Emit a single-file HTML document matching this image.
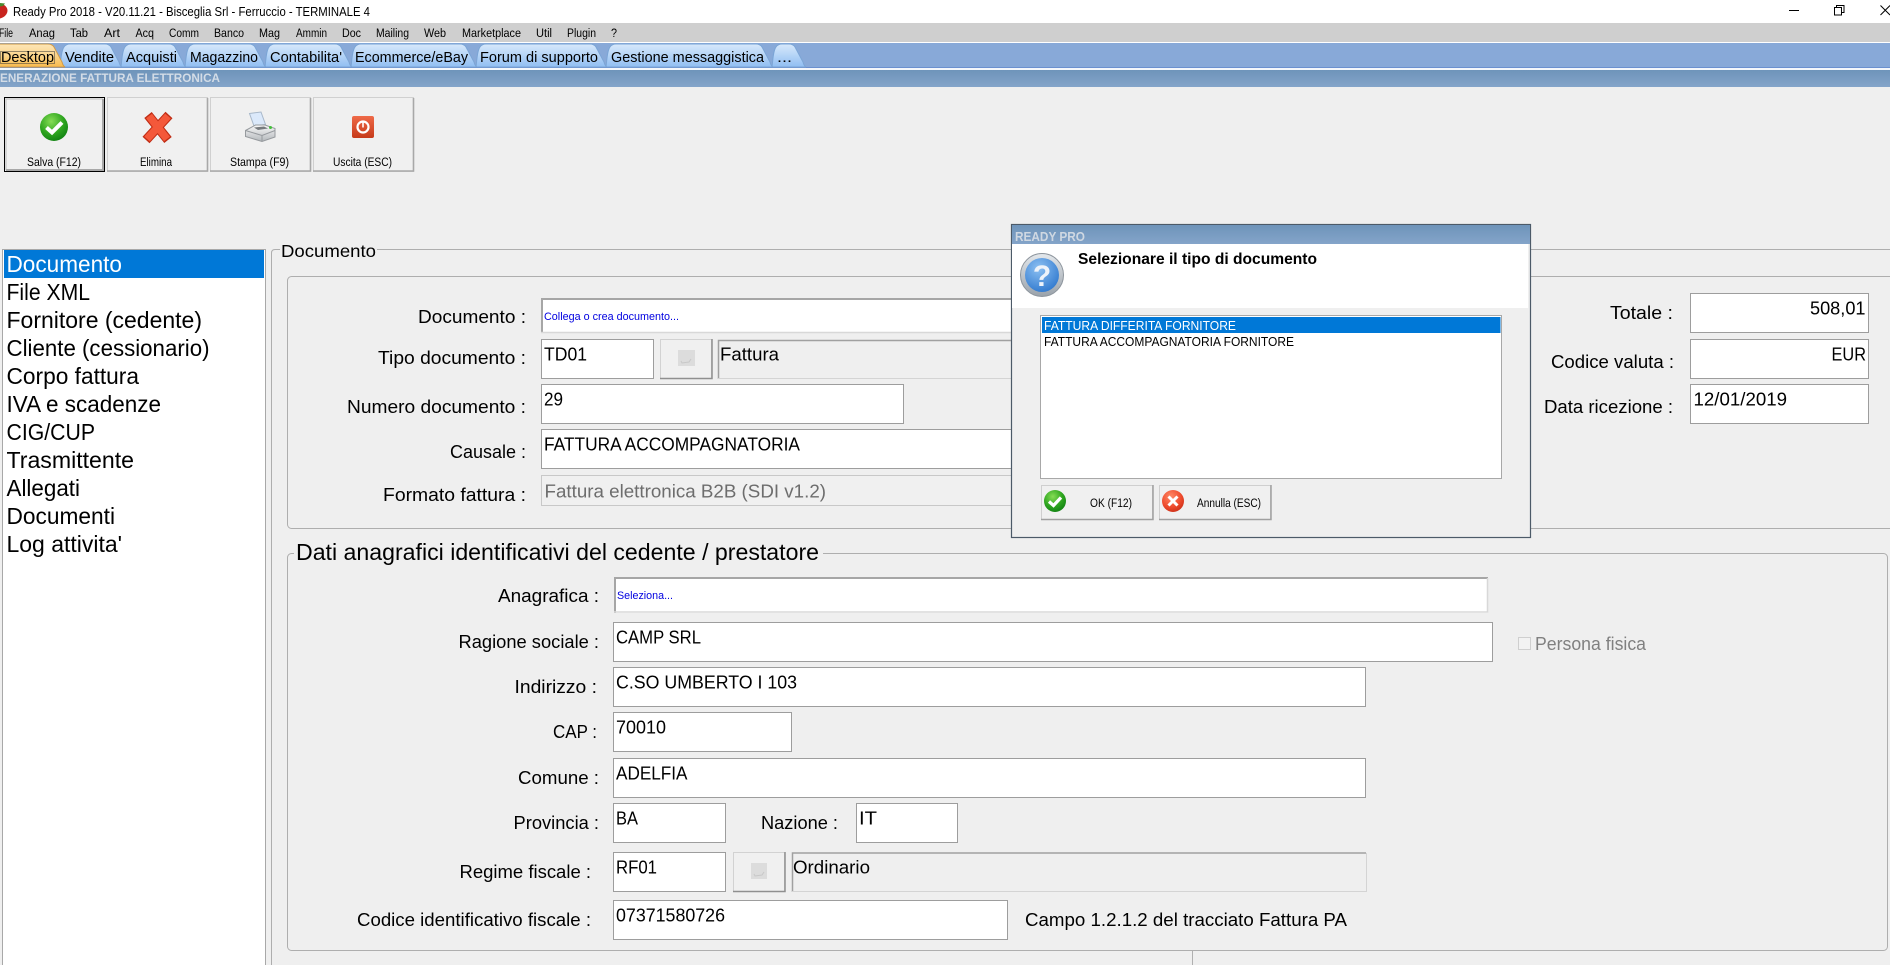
<!DOCTYPE html>
<html lang="it">
<head>
<meta charset="utf-8">
<title>Ready Pro 2018</title>
<style>
html,body{margin:0;padding:0;width:1890px;height:965px;overflow:hidden;background:#efefef}
svg{display:block}
text{font-family:"Liberation Sans",sans-serif;fill:#000;white-space:pre}
.mn{font-size:12.2px}
.tb{font-size:14.6px}
.bt{font-size:12.2px}
.li{font-size:23px}
.lb{font-size:18.5px}
.fv{font-size:18.6px;transform:translateY(-0.5px)}
.f{fill:#fff;stroke:#9d9d9d;stroke-width:1}
.g{fill:none;stroke:#aeaeae;stroke-width:1}
.hi{stroke:#a6a6a6;stroke-width:2;fill:none}
</style>
</head>
<body>
<svg xmlns="http://www.w3.org/2000/svg" width="1890" height="965" viewBox="0 0 1890 965">
<defs>
<linearGradient id="tabB" x1="0" y1="0" x2="0" y2="1"><stop offset="0" stop-color="#d8e9fb"/><stop offset=".45" stop-color="#b8d6f7"/><stop offset="1" stop-color="#90bef2"/></linearGradient>
<linearGradient id="tabO" x1="0" y1="0" x2="0" y2="1"><stop offset="0" stop-color="#fde6b8"/><stop offset=".5" stop-color="#fbd58c"/><stop offset="1" stop-color="#f7b94c"/></linearGradient>
<linearGradient id="band" x1="0" y1="0" x2="0" y2="1"><stop offset="0" stop-color="#6e94ba"/><stop offset="1" stop-color="#84a4c9"/></linearGradient>
<radialGradient id="grn" cx=".4" cy=".3" r=".8"><stop offset="0" stop-color="#86dd55"/><stop offset=".55" stop-color="#2ea51f"/><stop offset="1" stop-color="#0b7a10"/></radialGradient>
<radialGradient id="red" cx=".4" cy=".3" r=".8"><stop offset="0" stop-color="#ff8a68"/><stop offset=".6" stop-color="#ee4a2c"/><stop offset="1" stop-color="#c42a14"/></radialGradient>
<linearGradient id="pw" x1="0" y1="0" x2="0" y2="1"><stop offset="0" stop-color="#ef6a48"/><stop offset="1" stop-color="#c63a1a"/></linearGradient>
<linearGradient id="sil" x1="0" y1="0" x2="0" y2="1"><stop offset="0" stop-color="#e4e8ec"/><stop offset="1" stop-color="#9aa2aa"/></linearGradient>
<radialGradient id="blu" cx=".4" cy=".3" r=".8"><stop offset="0" stop-color="#8cc0f2"/><stop offset="1" stop-color="#2a74cc"/></radialGradient>
<linearGradient id="prn" x1="0" y1="0" x2="0" y2="1"><stop offset="0" stop-color="#f8f8f8"/><stop offset="1" stop-color="#b4b8bc"/></linearGradient>
</defs>

<rect width="1890" height="965" fill="#efefef"/>

<!-- title bar -->
<rect width="1890" height="23" fill="#fff"/>
<path d="M0 3.500C4 4 7.500 7 7.500 10.500C7.500 14.500 4 17.500 0 18.500Z" fill="#c8241e"/>
<path d="M0 3 L5 3.500 L3 6 L0 6.500 Z" fill="#4b8a30"/>
<text x="13" y="16" font-size="12.8" textLength="357" lengthAdjust="spacingAndGlyphs">Ready Pro 2018 - V20.11.21 - Bisceglia Srl - Ferruccio - TERMINALE 4</text>
<path d="M1789 10.500H1799" stroke="#000" fill="none"/>
<path d="M1834.500 7.500h7v7.500h-7z M1836.500 7V5.500h7.500v7h-2.500" stroke="#000" fill="none"/>
<path d="M1880.500 5.500L1890 15M1890 5.500L1880.500 15" stroke="#000" fill="none"/>

<!-- menu -->
<rect y="23" width="1890" height="19" fill="#cfcfcf"/>
<rect y="42" width="1890" height="1" fill="#fff"/>
<text class="mn" x="-1" y="37" textLength="14" lengthAdjust="spacingAndGlyphs">File</text>
<text class="mn" x="29" y="37" textLength="26" lengthAdjust="spacingAndGlyphs">Anag</text>
<text class="mn" x="70" y="37" textLength="18" lengthAdjust="spacingAndGlyphs">Tab</text>
<text class="mn" x="104" y="37" textLength="16" lengthAdjust="spacingAndGlyphs">Art</text>
<text class="mn" x="135.500" y="37" textLength="18.500" lengthAdjust="spacingAndGlyphs">Acq</text>
<text class="mn" x="169" y="37" textLength="30" lengthAdjust="spacingAndGlyphs">Comm</text>
<text class="mn" x="214" y="37" textLength="30" lengthAdjust="spacingAndGlyphs">Banco</text>
<text class="mn" x="259" y="37" textLength="21" lengthAdjust="spacingAndGlyphs">Mag</text>
<text class="mn" x="296" y="37" textLength="31" lengthAdjust="spacingAndGlyphs">Ammin</text>
<text class="mn" x="342" y="37" textLength="19" lengthAdjust="spacingAndGlyphs">Doc</text>
<text class="mn" x="376" y="37" textLength="33" lengthAdjust="spacingAndGlyphs">Mailing</text>
<text class="mn" x="424" y="37" textLength="22" lengthAdjust="spacingAndGlyphs">Web</text>
<text class="mn" x="462" y="37" textLength="59" lengthAdjust="spacingAndGlyphs">Marketplace</text>
<text class="mn" x="536" y="37" textLength="16" lengthAdjust="spacingAndGlyphs">Util</text>
<text class="mn" x="567" y="37" textLength="29" lengthAdjust="spacingAndGlyphs">Plugin</text>
<text class="mn" x="611" y="37" textLength="6" lengthAdjust="spacingAndGlyphs">?</text>

<!-- tab bar -->
<rect y="43" width="1890" height="24" fill="#88a9d8"/>
<rect y="67" width="1890" height="1" fill="#6b90cf"/>
<rect y="68" width="1890" height="2" fill="#f4f7fb"/>
<g stroke="#7ba5d6" stroke-width="1">
<path fill="url(#tabB)" d="M772 67C773 60 773 51 776 47Q778 44 782 44H789Q793 44 795 47L803 62Q804 66 806 67Z"/>
<path fill="url(#tabB)" d="M606 67C607 60 607 51 610 47Q612 44 616 44H756Q760 44 762 47L770 62Q771 66 773 67Z"/>
<path fill="url(#tabB)" d="M476 67C477 60 477 51 480 47Q482 44 486 44H590Q594 44 596 47L604 62Q605 66 607 67Z"/>
<path fill="url(#tabB)" d="M351 67C352 60 352 51 355 47Q357 44 361 44H460Q464 44 466 47L474 62Q475 66 477 67Z"/>
<path fill="url(#tabB)" d="M265 67C266 60 266 51 269 47Q271 44 275 44H335Q339 44 341 47L349 62Q350 66 352 67Z"/>
<path fill="url(#tabB)" d="M185 67C186 60 186 51 189 47Q191 44 195 44H249Q253 44 255 47L263 62Q264 66 266 67Z"/>
<path fill="url(#tabB)" d="M121 67C122 60 122 51 125 47Q127 44 131 44H169Q173 44 175 47L183 62Q184 66 186 67Z"/>
<path fill="url(#tabB)" d="M60 67C61 60 61 51 64 47Q66 44 70 44H105Q109 44 111 47L119 62Q120 66 122 67Z"/>
<path fill="url(#tabO)" stroke="#d09a48" d="M-6 67V44H48Q52 44 54 47L62 62Q63 66 65 67Z"/>
</g>
<rect x="0.500" y="51.500" width="54" height="12" fill="none" stroke="#333" stroke-width="1" stroke-dasharray="1 1"/>
<text class="tb" x="1" y="62" textLength="53" lengthAdjust="spacingAndGlyphs">Desktop</text>
<text class="tb" x="65" y="62" textLength="49" lengthAdjust="spacingAndGlyphs">Vendite</text>
<text class="tb" x="126" y="62" textLength="51" lengthAdjust="spacingAndGlyphs">Acquisti</text>
<text class="tb" x="190" y="62" textLength="68" lengthAdjust="spacingAndGlyphs">Magazzino</text>
<text class="tb" x="270" y="62" textLength="72" lengthAdjust="spacingAndGlyphs">Contabilita'</text>
<text class="tb" x="355" y="62" textLength="113" lengthAdjust="spacingAndGlyphs">Ecommerce/eBay</text>
<text class="tb" x="480" y="62" textLength="118" lengthAdjust="spacingAndGlyphs">Forum di supporto</text>
<text class="tb" x="611" y="62" textLength="153" lengthAdjust="spacingAndGlyphs">Gestione messaggistica</text>
<text class="tb" x="777" y="62" textLength="15" lengthAdjust="spacingAndGlyphs">...</text>

<!-- subtitle band -->
<rect y="70" width="1890" height="17" fill="url(#band)"/>
<text x="0" y="82" font-size="12.2" font-weight="bold" style="fill:#d3dce6" textLength="220" lengthAdjust="spacingAndGlyphs">ENERAZIONE FATTURA ELETTRONICA</text>

<!-- toolbar buttons -->
<g>
<rect x="4.500" y="97.500" width="100" height="74" fill="#f0f0f0" stroke="#000" stroke-width="1"/>
<path d="M6 170V99H103" fill="none" stroke="#cfcfcf" stroke-width="1.600"/>
<path d="M6 170H103V99" fill="none" stroke="#a8a8a8" stroke-width="2"/>
<rect x="107.500" y="97.500" width="100" height="74" fill="#f0f0f0" stroke="#d0d0d0"/>
<path d="M107 171H207.500V98" fill="none" stroke="#a8a8a8" stroke-width="1.600"/>
<rect x="210.500" y="97.500" width="100" height="74" fill="#f0f0f0" stroke="#d0d0d0"/>
<path d="M210 171H310.500V98" fill="none" stroke="#a8a8a8" stroke-width="1.600"/>
<rect x="313.500" y="97.500" width="100" height="74" fill="#f0f0f0" stroke="#d0d0d0"/>
<path d="M313 171H413.500V98" fill="none" stroke="#a8a8a8" stroke-width="1.600"/>
</g>
<circle cx="54" cy="127" r="14" fill="url(#grn)"/>
<path d="M46.500 127.500L52 132.500L62 122.500" fill="none" stroke="#fff" stroke-width="4"/>
<path d="M146 140L169 115M148 115L168 140" fill="none" stroke="#c02c14" stroke-width="9.500"/>
<path d="M147 139L168 116M149 116L167 139" fill="none" stroke="#f4583a" stroke-width="7.500"/>
<path d="M249.500 113.500L261 112L265.500 124.500L254 126Z" fill="#dbe9fb" stroke="#a8b8ca" stroke-width="1"/>
<path d="M245.500 130.500L255.500 125H265L275 128.500V137L262 141.500L245.500 136.500Z" fill="url(#prn)" stroke="#969a9e" stroke-width="1"/>
<path d="M245.500 130.500L262 135.500L275 130.500" fill="none" stroke="#969a9e"/>
<path d="M262 135.500V141.500" stroke="#969a9e" fill="none"/>
<path d="M254 127.500L264 126.500L268 128.500L258 130Z" fill="#777b7f"/>
<circle cx="270.500" cy="127.500" r="1.500" fill="#45c03c"/>
<rect x="352" y="116" width="22" height="22" rx="2" fill="url(#pw)"/>
<circle cx="363" cy="127" r="5.500" fill="none" stroke="#fff" stroke-width="2.200"/>
<path d="M363 122.500V127.500" stroke="#fff" stroke-width="1.600"/>
<text class="bt" x="27" y="166" textLength="54" lengthAdjust="spacingAndGlyphs">Salva (F12)</text>
<text class="bt" x="140" y="166" textLength="32" lengthAdjust="spacingAndGlyphs">Elimina</text>
<text class="bt" x="230" y="166" textLength="59" lengthAdjust="spacingAndGlyphs">Stampa (F9)</text>
<text class="bt" x="333" y="166" textLength="59" lengthAdjust="spacingAndGlyphs">Uscita (ESC)</text>

<!-- outer group -->
<path class="g" d="M271.500 965V253Q271.500 249.500 275 249.500H280M377 249.500H1890"/>
<text x="281" y="257" font-size="17.500" textLength="95" lengthAdjust="spacingAndGlyphs">Documento</text>
<path d="M1192.500 951V965" stroke="#b0b0b0" fill="none"/>

<!-- left list -->
<rect x="2.500" y="249.500" width="263" height="730" fill="#fff" stroke="#a8a8a8" stroke-width="1"/>
<rect x="4" y="250" width="260" height="28" fill="#0078d7"/>
<text class="li" x="6.500" y="272" style="fill:#fff" textLength="115.500" lengthAdjust="spacingAndGlyphs">Documento</text>
<text class="li" x="6.500" y="300" textLength="83.500" lengthAdjust="spacingAndGlyphs">File XML</text>
<text class="li" x="6.500" y="328" textLength="195.500" lengthAdjust="spacingAndGlyphs">Fornitore (cedente)</text>
<text class="li" x="6.500" y="356" textLength="203" lengthAdjust="spacingAndGlyphs">Cliente (cessionario)</text>
<text class="li" x="6.500" y="384" textLength="132.500" lengthAdjust="spacingAndGlyphs">Corpo fattura</text>
<text class="li" x="6.500" y="412" textLength="154.500" lengthAdjust="spacingAndGlyphs">IVA e scadenze</text>
<text class="li" x="6.500" y="440" textLength="88.500" lengthAdjust="spacingAndGlyphs">CIG/CUP</text>
<text class="li" x="6.500" y="468" textLength="127.500" lengthAdjust="spacingAndGlyphs">Trasmittente</text>
<text class="li" x="6.500" y="496" textLength="73.500" lengthAdjust="spacingAndGlyphs">Allegati</text>
<text class="li" x="6.500" y="524" textLength="108.500" lengthAdjust="spacingAndGlyphs">Documenti</text>
<text class="li" x="6.500" y="552" textLength="115.500" lengthAdjust="spacingAndGlyphs">Log attivita'</text>

<!-- group 1 -->
<rect class="g" x="287.500" y="276.500" width="1620" height="252" rx="4" ry="4"/>

<text class="lb" x="418" y="323" textLength="108" lengthAdjust="spacingAndGlyphs">Documento :</text>
<rect x="541" y="298" width="480" height="35" fill="#fff"/>
<path class="hi" d="M542 333V299H1021"/>
<path d="M541 332.500H1021" stroke="#d8d8d8" fill="none" stroke-width="1.500"/>
<text x="544" y="320" font-size="11" style="fill:#0000e0" textLength="135" lengthAdjust="spacingAndGlyphs">Collega o crea documento...</text>

<text class="lb" x="378" y="364" textLength="148" lengthAdjust="spacingAndGlyphs">Tipo documento :</text>
<rect class="f" x="541.500" y="339.500" width="112" height="39"/>
<text class="fv" x="544" y="361" textLength="43" lengthAdjust="spacingAndGlyphs">TD01</text>
<rect x="660.500" y="339.500" width="51" height="39" fill="#f0f0f0" stroke="#d2d2d2"/>
<path d="M660 378.500H712V339" fill="none" stroke="#8f8f8f" stroke-width="1.500"/>
<rect x="678" y="350" width="17" height="16" fill="#dcdcdc"/>
<path d="M681 361l1 2 7 -1 2 -3" stroke="#c8c8c8" fill="none"/>
<rect x="718" y="340" width="303" height="39" fill="#efefef"/>
<path d="M718.500 379V340.500H1021" fill="none" stroke="#a0a0a0" stroke-width="1.500"/>
<path d="M718 378.500H1021" fill="none" stroke="#d4d4d4"/>
<text class="fv" x="720" y="361" textLength="59" lengthAdjust="spacingAndGlyphs">Fattura</text>

<text class="lb" x="347" y="413" textLength="179" lengthAdjust="spacingAndGlyphs">Numero documento :</text>
<rect class="f" x="541.500" y="384.500" width="362" height="39"/>
<text class="fv" x="544" y="406" textLength="19" lengthAdjust="spacingAndGlyphs">29</text>

<text class="lb" x="450" y="458" textLength="76" lengthAdjust="spacingAndGlyphs">Causale :</text>
<rect class="f" x="541.500" y="429.500" width="480" height="39"/>
<text class="fv" x="544" y="451" textLength="256" lengthAdjust="spacingAndGlyphs">FATTURA ACCOMPAGNATORIA</text>

<text class="lb" x="383" y="501" textLength="143" lengthAdjust="spacingAndGlyphs">Formato fattura :</text>
<rect x="541.500" y="475.500" width="480" height="30" fill="#f0f0f0" stroke="#c8c8c8"/>
<text class="fv" x="544.500" y="498" style="fill:#6d6d6d" textLength="281.500" lengthAdjust="spacingAndGlyphs">Fattura elettronica B2B (SDI v1.2)</text>

<!-- right fields -->
<text class="lb" x="1610" y="319" textLength="63" lengthAdjust="spacingAndGlyphs">Totale :</text>
<rect class="f" x="1690.500" y="293.500" width="178" height="39"/>
<text class="fv" x="1810" y="315" textLength="55.500" lengthAdjust="spacingAndGlyphs">508,01</text>
<text class="lb" x="1551" y="368" textLength="123" lengthAdjust="spacingAndGlyphs">Codice valuta :</text>
<rect class="f" x="1690.500" y="339.500" width="178" height="39"/>
<text class="fv" x="1831.500" y="361" textLength="34.500" lengthAdjust="spacingAndGlyphs">EUR</text>
<text class="lb" x="1544" y="413" textLength="129" lengthAdjust="spacingAndGlyphs">Data ricezione :</text>
<rect class="f" x="1690.500" y="384.500" width="178" height="39"/>
<text class="fv" x="1693.500" y="406" textLength="93.500" lengthAdjust="spacingAndGlyphs">12/01/2019</text>

<!-- group 2 -->
<rect class="g" x="287.500" y="553.500" width="1600" height="397" rx="4" ry="4"/>
<rect x="294" y="545" width="529" height="16" fill="#efefef"/>
<text x="296" y="560" font-size="23.500" textLength="523" lengthAdjust="spacingAndGlyphs">Dati anagrafici identificativi del cedente / prestatore</text>

<text class="lb" x="498" y="602" textLength="101" lengthAdjust="spacingAndGlyphs">Anagrafica :</text>
<rect x="614" y="577" width="874" height="36" fill="#fff"/>
<path class="hi" d="M615 613V578H1488"/>
<path d="M614 612H1487.500V578" stroke="#d8d8d8" fill="none" stroke-width="1.500"/>
<text x="617" y="599" font-size="11" style="fill:#0000e0" textLength="56" lengthAdjust="spacingAndGlyphs">Seleziona...</text>

<text class="lb" x="458.500" y="648" textLength="140.500" lengthAdjust="spacingAndGlyphs">Ragione sociale :</text>
<rect class="f" x="613.500" y="622.500" width="879" height="39"/>
<text class="fv" x="616" y="644" textLength="85" lengthAdjust="spacingAndGlyphs">CAMP SRL</text>
<rect x="1518.500" y="637.500" width="12" height="12" fill="#f2f2f2" stroke="#cfcfcf"/>
<text class="lb" x="1535" y="650" style="fill:#808080" textLength="111" lengthAdjust="spacingAndGlyphs">Persona fisica</text>

<text class="lb" x="514.500" y="693" textLength="82.500" lengthAdjust="spacingAndGlyphs">Indirizzo :</text>
<rect class="f" x="613.500" y="667.500" width="752" height="39"/>
<text class="fv" x="616" y="689" textLength="181" lengthAdjust="spacingAndGlyphs">C.SO UMBERTO I 103</text>

<text class="lb" x="553" y="738" textLength="44" lengthAdjust="spacingAndGlyphs">CAP :</text>
<rect class="f" x="613.500" y="712.500" width="178" height="39"/>
<text class="fv" x="616" y="734" textLength="50" lengthAdjust="spacingAndGlyphs">70010</text>

<text class="lb" x="518" y="784" textLength="81" lengthAdjust="spacingAndGlyphs">Comune :</text>
<rect class="f" x="613.500" y="758.500" width="752" height="39"/>
<text class="fv" x="616" y="780" textLength="71.500" lengthAdjust="spacingAndGlyphs">ADELFIA</text>

<text class="lb" x="513.500" y="829" textLength="85.500" lengthAdjust="spacingAndGlyphs">Provincia :</text>
<rect class="f" x="613.500" y="803.500" width="112" height="39"/>
<text class="fv" x="616" y="825" textLength="22" lengthAdjust="spacingAndGlyphs">BA</text>
<text class="lb" x="761" y="829" textLength="77" lengthAdjust="spacingAndGlyphs">Nazione :</text>
<rect class="f" x="856.500" y="803.500" width="101" height="39"/>
<text class="fv" x="859" y="825" textLength="18" lengthAdjust="spacingAndGlyphs">IT</text>

<text class="lb" x="459.500" y="878" textLength="131.500" lengthAdjust="spacingAndGlyphs">Regime fiscale :</text>
<rect class="f" x="613.500" y="852.500" width="112" height="39"/>
<text class="fv" x="616" y="874" textLength="41" lengthAdjust="spacingAndGlyphs">RF01</text>
<rect x="733.500" y="852.500" width="51" height="39" fill="#f0f0f0" stroke="#d2d2d2"/>
<path d="M733 891.500H785V852" fill="none" stroke="#8f8f8f" stroke-width="1.500"/>
<rect x="751" y="863" width="16" height="16" fill="#dcdcdc"/>
<path d="M754 874l1 2 7 -1 2 -3" stroke="#c8c8c8" fill="none"/>
<rect x="792" y="852" width="575" height="40" fill="#efefef"/>
<path d="M792.500 892V853H1366" fill="none" stroke="#a0a0a0" stroke-width="1.500"/>
<path d="M792 891.500H1366.500V853" fill="none" stroke="#d4d4d4"/>
<text class="fv" x="793" y="874" textLength="77" lengthAdjust="spacingAndGlyphs">Ordinario</text>

<text class="lb" x="357" y="926" textLength="234" lengthAdjust="spacingAndGlyphs">Codice identificativo fiscale :</text>
<rect class="f" x="613.500" y="900.500" width="394" height="39"/>
<text class="fv" x="616" y="922" textLength="109" lengthAdjust="spacingAndGlyphs">07371580726</text>
<text class="lb" x="1025" y="926" textLength="322" lengthAdjust="spacingAndGlyphs">Campo 1.2.1.2 del tracciato Fattura PA</text>

<!-- dialog -->
<rect x="1011.500" y="224.500" width="519" height="313" fill="#efefef" stroke="#4c5a68" stroke-width="1.200"/>
<rect x="1012" y="225" width="518" height="19" fill="url(#band)"/>
<text x="1015" y="241" font-size="12.600" font-weight="bold" style="fill:#cfd8e2" textLength="70" lengthAdjust="spacingAndGlyphs">READY PRO</text>
<rect x="1012" y="244" width="516" height="64" fill="#fff"/>
<circle cx="1042" cy="275" r="21.500" fill="url(#sil)" stroke="#8d959d"/>
<circle cx="1042" cy="275" r="17" fill="url(#blu)"/>
<text x="1042" y="286" font-size="30" font-weight="bold" text-anchor="middle" style="fill:#eef3fa">?</text>
<text x="1078" y="264" font-size="15.800" font-weight="bold" textLength="239" lengthAdjust="spacingAndGlyphs">Selezionare il tipo di documento</text>

<rect x="1040.500" y="315.500" width="461" height="163" fill="#fff" stroke="#a8a8a8"/>
<rect x="1042" y="317" width="458.500" height="16" fill="#0078d7"/>
<text x="1044" y="330" font-size="13" style="fill:#fff" textLength="192" lengthAdjust="spacingAndGlyphs">FATTURA DIFFERITA FORNITORE</text>
<text x="1044" y="346" font-size="13" textLength="250" lengthAdjust="spacingAndGlyphs">FATTURA ACCOMPAGNATORIA FORNITORE</text>

<rect x="1041.500" y="485.500" width="111" height="34" fill="#f0f0f0" stroke="#cfcfcf"/>
<path d="M1041 519.500H1153V485" fill="none" stroke="#a0a0a0" stroke-width="1.500"/>
<circle cx="1055" cy="501" r="11" fill="url(#grn)"/>
<path d="M1049 501.500L1053.500 505.500L1061 497.500" fill="none" stroke="#fff" stroke-width="3.200"/>
<text class="bt" x="1090" y="507" textLength="42" lengthAdjust="spacingAndGlyphs">OK (F12)</text>
<rect x="1159.500" y="485.500" width="111" height="34" fill="#f0f0f0" stroke="#cfcfcf"/>
<path d="M1159 519.500H1271V485" fill="none" stroke="#a0a0a0" stroke-width="1.500"/>
<circle cx="1173" cy="501" r="11" fill="url(#red)"/>
<path d="M1168.500 496.500L1177.500 505.500M1177.500 496.500L1168.500 505.500" fill="none" stroke="#fff" stroke-width="3"/>
<text class="bt" x="1197" y="507" textLength="64" lengthAdjust="spacingAndGlyphs">Annulla (ESC)</text>
</svg>
</body>
</html>
